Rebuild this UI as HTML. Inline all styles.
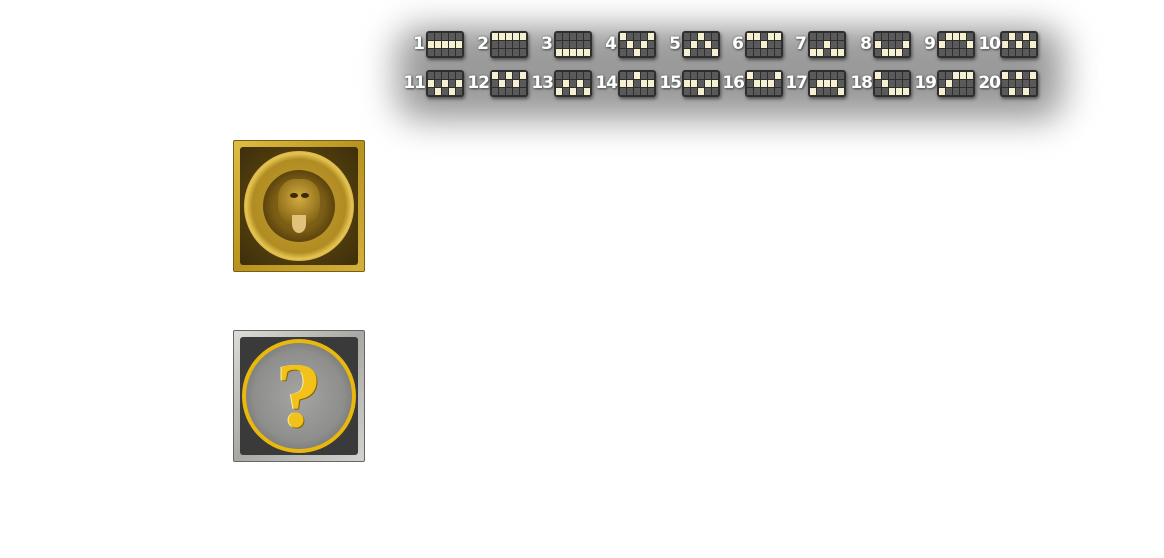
<!DOCTYPE html>
<html><head><meta charset="utf-8"><style>
html,body{margin:0;padding:0;background:#fff;width:1164px;height:558px;overflow:hidden;position:relative;font-family:"Liberation Sans",sans-serif}
.panel{position:absolute;left:392px;top:24px;width:676px;height:100px;background:#b4b4b4;filter:blur(16px);border-radius:30px}
.panel2{position:absolute;left:415px;top:40px;width:630px;height:64px;background:#9a9a9a;filter:blur(12px);border-radius:20px}
.box{position:absolute;width:38px;height:27px;background:#2e2e2e;border-radius:3px;box-shadow:1px 2px 3px rgba(0,0,0,.5);display:grid;grid-template-columns:repeat(5,6px);grid-template-rows:repeat(3,7px);gap:1px;padding:2px;box-sizing:border-box}
.box i{background:#5a5a5a;display:block}
.box i.on{background:#f4f0d0}
.n{position:absolute;color:#fff;font-family:"DejaVu Sans",sans-serif;font-weight:bold;font-size:17px;line-height:17px;text-shadow:0 0 2px #666,1px 1px 2px #444;text-align:right;width:30px;letter-spacing:-1px}
.sym{position:absolute;left:233px;width:132px;height:132px;border-radius:2px;box-sizing:border-box}
</style></head><body>
<div class="panel"></div><div class="panel2"></div>
<div id="boxes"></div>
<span class="n" style="left:394px;top:36px">1</span>
<span class="n" style="left:458px;top:36px">2</span>
<span class="n" style="left:522px;top:36px">3</span>
<span class="n" style="left:586px;top:36px">4</span>
<span class="n" style="left:650px;top:36px">5</span>
<span class="n" style="left:713px;top:36px">6</span>
<span class="n" style="left:776px;top:36px">7</span>
<span class="n" style="left:841px;top:36px">8</span>
<span class="n" style="left:905px;top:36px">9</span>
<span class="n" style="left:970px;top:36px">10</span>
<span class="n" style="left:395px;top:75px">11</span>
<span class="n" style="left:459px;top:75px">12</span>
<span class="n" style="left:523px;top:75px">13</span>
<span class="n" style="left:587px;top:75px">14</span>
<span class="n" style="left:651px;top:75px">15</span>
<span class="n" style="left:714px;top:75px">16</span>
<span class="n" style="left:777px;top:75px">17</span>
<span class="n" style="left:842px;top:75px">18</span>
<span class="n" style="left:906px;top:75px">19</span>
<span class="n" style="left:970px;top:75px">20</span>

<div class="sym" style="top:140px;background:linear-gradient(135deg,#e0bd45,#b8921f 50%,#d6b03c);border:1px solid #7a5e10;">
  <div style="position:absolute;left:6px;top:6px;width:118px;height:118px;background:radial-gradient(circle,#6b5416,#3e2e0a);border-radius:3px"></div>
  <div style="position:absolute;left:10px;top:10px;width:110px;height:110px;border-radius:50%;background:radial-gradient(circle,#c9a235 0,#b08c22 60%,#e6c452 68%,#a8841c 80%,#d4b040 94%,#7a5c10 100%)"></div>
  <div style="position:absolute;left:29px;top:29px;width:72px;height:72px;border-radius:50%;background:radial-gradient(circle,#8a6a1a 0,#7a5c14 50%,#4a360a 82%,#e0bc4a 92%,#8c6a18 100%)"></div>
  <div style="position:absolute;left:44px;top:38px;width:42px;height:48px;border-radius:40% 40% 45% 45%;background:radial-gradient(circle at 50% 40%,#d4ac42,#8a6a18 70%,#5a420c)"></div>
  <div style="position:absolute;left:56px;top:52px;width:8px;height:5px;border-radius:50%;background:#3a2a08"></div>
  <div style="position:absolute;left:67px;top:52px;width:8px;height:5px;border-radius:50%;background:#3a2a08"></div>
  <div style="position:absolute;left:58px;top:74px;width:14px;height:18px;border-radius:0 0 50% 50%;background:#e0c27a"></div>
</div>

<div class="sym" style="top:330px;background:linear-gradient(135deg,#dcdcd8,#a8a8a4 50%,#d2d2ce);border:1px solid #666;">
  <div style="position:absolute;left:6px;top:6px;width:118px;height:118px;background:#3a3a3a;border-radius:3px"></div>
  <div style="position:absolute;left:8px;top:8px;width:114px;height:114px;border-radius:50%;background:#e8b80e;box-sizing:border-box"></div>
  <div style="position:absolute;left:12px;top:12px;width:106px;height:106px;border-radius:50%;background:radial-gradient(circle,#a4a4a2 0,#8e8e8c 60%,#6e6e6c 85%,#c8c8c6 95%,#777 100%)"></div>
  <div style="position:absolute;left:0;top:14px;width:130px;text-align:center;font:bold 92px/100px 'Liberation Serif',serif;color:#f2c21a;text-shadow:1px 1px 0 #8a6a00,-1px 0 0 #fff3a0">?</div>
</div>

<script>
var P=[
[[],[0,1,2,3,4],[]],[[0,1,2,3,4],[],[]],[[],[],[0,1,2,3,4]],[[0,4],[1,3],[2]],[[2],[1,3],[0,4]],
[[0,1,3,4],[2],[]],[[],[2],[0,1,3,4]],[[],[0,4],[1,2,3]],[[1,2,3],[0,4],[]],[[1,3],[0,2,4],[]],
[[],[0,2,4],[1,3]],[[0,2,4],[1,3],[]],[[],[1,3],[0,2,4]],[[2],[0,1,3,4],[]],[[],[0,1,3,4],[2]],
[[0,4],[1,2,3],[]],[[],[1,2,3],[0,4]],[[0],[1],[2,3,4]],[[2,3,4],[1],[0]],[[0,2,4],[],[1,3]]];
var X=[426,490,554,618,682,745,808,873,937,1000];
var h='';
for(var k=0;k<20;k++){var x=X[k%10],y=k<10?31:70;h+='<div class="box" style="left:'+x+'px;top:'+y+'px">';
for(var r=0;r<3;r++)for(var c=0;c<5;c++)h+='<i'+(P[k][r].indexOf(c)>=0?' class="on"':'')+'></i>';h+='</div>';}
document.getElementById('boxes').innerHTML=h;
</script>
</body></html>
